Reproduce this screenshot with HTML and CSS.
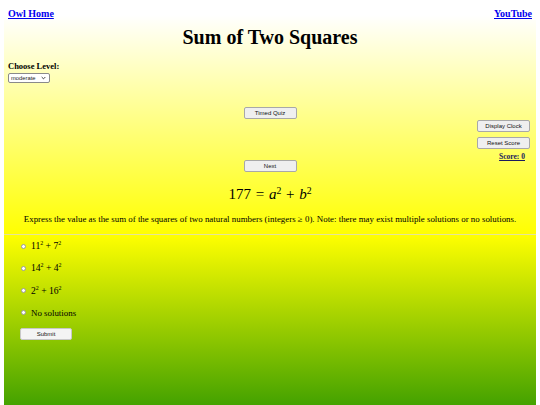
FILE: index.html
```html
<!DOCTYPE html>
<html>
<head>
<meta charset="utf-8">
<title>Sum of Two Squares</title>
<link rel="stylesheet" href="styles.css">
</head>
<body>
<div class="top">
  <nav class="nav">
    <a href="#">Owl Home</a>
    <a href="#">YouTube</a>
  </nav>
  <h1 class="title">Sum of Two Squares</h1>
  <div class="level">
    <div class="level-label">Choose Level:</div>
    <div class="select-wrap">
      <select class="level-select"><option>moderate</option></select>
      <svg class="chev" viewBox="0 0 6 4" width="5" height="4"><path d="M0.8 0.8 L3 3 L5.2 0.8" fill="none" stroke="#333" stroke-width="1.1"/></svg>
    </div>
  </div>
  <div class="controls">
    <div></div>
    <div class="center-col">
      <button class="btn">Timed Quiz</button>
      <button class="btn next">Next</button>
    </div>
    <div class="right-col">
      <button class="btn">Display Clock</button>
      <button class="btn">Reset Score</button>
      <a class="score" href="#">Score: 0</a>
    </div>
  </div>
  <div class="equation">177 <span class="op">=</span> <i>a</i><sup>2</sup> <span class="op">+</span> <i>b</i><sup>2</sup></div>
  <p class="prompt">Express the value as the sum of the squares of two natural numbers (integers <span class="ge">≥</span> 0). Note: there may exist multiple solutions or no solutions.</p>
</div>
<div class="answers">
  <label class="opt"><input type="radio" name="a"><span class="math">11<sup>2</sup> + 7<sup>2</sup></span></label>
  <label class="opt"><input type="radio" name="a"><span class="math">14<sup>2</sup> + 4<sup>2</sup></span></label>
  <label class="opt"><input type="radio" name="a"><span class="math">2<sup>2</sup> + 16<sup>2</sup></span></label>
  <label class="opt"><input type="radio" name="a"><span>No solutions</span></label>
  <button class="btn submit">Submit</button>
</div>
</body>
</html>
```
FILE: styles.css
```css
html { background: #fff; }
body {
  margin: 0 4px;
  font-family: "Liberation Serif", "Times New Roman", serif;
  color: #000;
}
.top {
  background: linear-gradient(to bottom, #ffffff 0px, #ffffff 15px, #ffff00 235px);
  padding: 0 4px 9px 4px;
  border-bottom: 1px solid #e4e49a;
}
.nav {
  display: flex;
  justify-content: space-between;
  padding-top: 8px;
  font-size: 10px;
  line-height: 12px;
  font-weight: bold;
}
.nav a { color: #0000ee; text-decoration: underline; }
.title {
  margin: 5px 0 0;
  text-align: center;
  font-size: 20px;
  line-height: 24px;
  font-weight: bold;
}
.level { margin-top: 12px; }
.level-label {
  font-size: 8.5px;
  line-height: 10px;
  font-weight: bold;
}
.select-wrap {
  position: relative;
  margin-top: 2px;
  width: 42px;
  height: 10px;
}
.level-select {
  appearance: none;
  -webkit-appearance: none;
  display: block;
  box-sizing: border-box;
  width: 42px;
  height: 10px;
  margin: 0;
  font-size: 5.8px;
  line-height: 8px;
  font-family: "Liberation Sans", Arial, sans-serif;
  color: #222;
  padding: 0 0 0 2px;
  border: 1px solid #8a8a8a;
  border-radius: 2px;
  background: #fff;
}
.chev {
  position: absolute;
  right: 4px;
  top: 3px;
  pointer-events: none;
}
.controls {
  display: grid;
  grid-template-columns: 1fr 53px 1fr;
  margin-top: 24px;
}
.center-col { display: flex; flex-direction: column; }
.next { margin-top: 41px; }
.right-col {
  display: flex;
  flex-direction: column;
  align-items: flex-end;
  margin-top: 13px;
  margin-right: 2px;
}
.right-col .btn + .btn { margin-top: 5px; }
.btn {
  width: 53px;
  height: 12px;
  padding: 0;
  font-family: "Liberation Sans", Arial, sans-serif;
  font-size: 6px;
  color: #111;
  background: #efefef;
  border: 1px solid #a8a8a8;
  border-radius: 2px;
}
.score {
  margin-top: 3px;
  margin-right: 5px;
  font-size: 7.5px;
  line-height: 9px;
  font-weight: bold;
  color: #1a1a5e;
  text-decoration: underline;
}
.equation {
  margin-top: 13px;
  text-align: center;
  font-size: 15px;
  line-height: 18px;
}
.equation sup { font-size: 65%; line-height: 0; vertical-align: 0.55em; }
.opt sup { font-size: 62%; line-height: 0; vertical-align: 0.75em; }
.op { margin: 0 1px; }
.prompt {
  margin: 11px 0 0;
  text-align: center;
  font-size: 8.9px;
  line-height: 11px;
  color: #000;
}
.answers {
  background: linear-gradient(to bottom, #ffff00 0px, #008000 232px);
  min-height: 230px;
  padding: 6px 0 0 17px;
  display: flex;
  flex-direction: column;
  align-items: flex-start;
}
.opt {
  display: flex;
  align-items: center;
  font-size: 8.9px;
  line-height: 10px;
  margin-bottom: 12.3px;
}
.opt .math { font-size: 9.6px; }
.opt input {
  appearance: none;
  -webkit-appearance: none;
  width: 5px;
  height: 5px;
  margin: 0 5px 0 0;
  border: 0.5px solid #9a9a9a;
  border-radius: 50%;
  background: #fff;
}
.opt:last-of-type { margin-bottom: 0; }
.submit {
  margin-top: 10px;
  margin-left: -1px;
  width: 52px;
  background: #f4f4f4;
  border-color: #c8c8c8;
}
```
